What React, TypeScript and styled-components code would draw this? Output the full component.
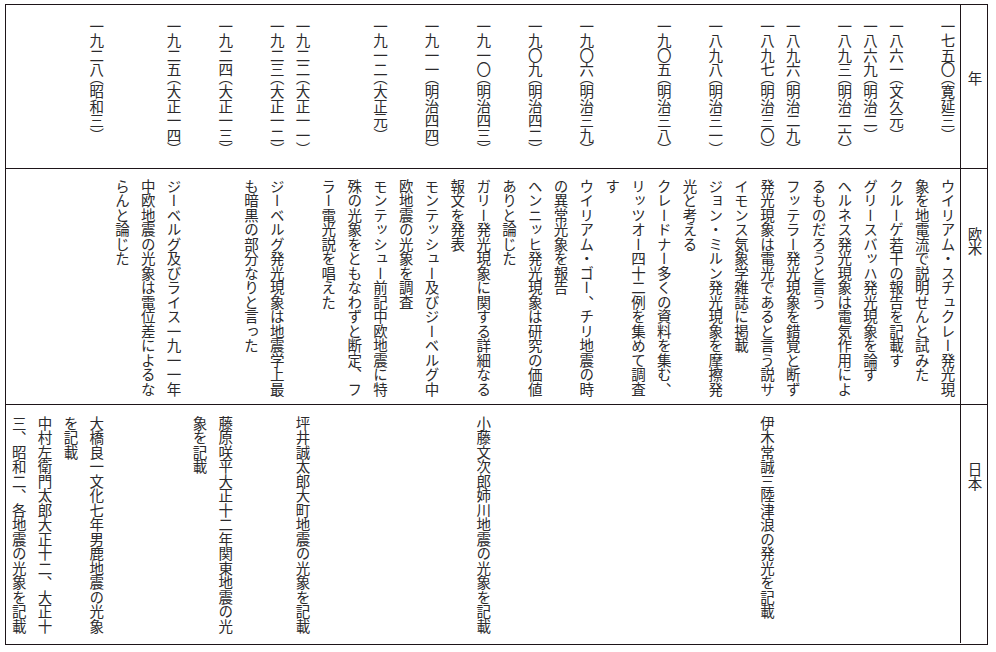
import React from "react";
import styled, { createGlobalStyle } from "styled-components";

const GlobalStyle = createGlobalStyle`
  html, body {
    margin: 0;
    background: #ffffff;
  }
  body {
    font-family: "Noto Sans CJK JP", sans-serif;
  }
`;

const Page = styled.div`
  padding: 4px 0 0 5px;
`;

// 縦書きのグリッド: columns = 上下の帯 (年/欧米/日本), rows = 右から左へ並ぶ各年
const Chart = styled.div`
  writing-mode: vertical-rl;
  display: grid;
  grid-template-columns: 164px 236px 238px;
  height: 641px;
  box-sizing: border-box;
  border: 1.5px solid #1e1519;
  font-size: 14.5px;
  line-height: 25.8px;
  color: #2b2a2c;
`;

type Band = "year" | "west" | "japan";

const padTop: Record<Band, number> = { year: 14, west: 10, japan: 11 };
const padBottom: Record<Band, number> = { year: 2, west: 4, japan: 5 };

const Cell = styled.div<{ $band: Band }>`
  box-sizing: border-box;
  padding-top: ${(p) => padTop[p.$band]}px;
  padding-bottom: ${(p) => padBottom[p.$band]}px;
  border-bottom: ${(p) => (p.$band === "japan" ? "none" : "1.5px solid #1e1519")};
  ${(p) =>
    p.$band === "year" &&
    `
    white-space: nowrap;
    font-feature-settings: "vhal" 1;
  `}
`;

const HeadCell = styled.div<{ $top: number; $last?: boolean }>`
  box-sizing: border-box;
  padding-top: ${(p) => p.$top}px;
  border-left: 1.5px solid #1e1519;
  border-bottom: ${(p) => (p.$last ? "none" : "1.5px solid #1e1519")};
  width: 27px;
  text-align: start;
`;

const Entry = styled.div``;

type Row = { year: string; west?: string; japan?: string[] };

const rows: Row[] = [
  { year: "一七五〇（寛延三）", west: "ウイリアム・スチュクレー発光現象を地電流で説明せんと試みた" },
  { year: "一八六一（文久元）", west: "クルーゲ若干の報告を記載す" },
  { year: "一八六九（明治二）", west: "グリースバッハ発光現象を論ず" },
  { year: "一八九三（明治二六）", west: "ヘルネス発光現象は電気作用によるものだろうと言う" },
  { year: "一八九六（明治二九）", west: "フッテラー発光現象を錯覚と断ず" },
  {
    year: "一八九七（明治三〇）",
    west: "発光現象は電光であると言う説サイモンス気象学雑誌に掲載",
    japan: ["伊木常誠三陸津浪の発光を記載"],
  },
  { year: "一八九八（明治三一）", west: "ジョン・ミルン発光現象を摩擦発光と考える" },
  { year: "一九〇五（明治三八）", west: "クレードナー多くの資料を集む、リッツオー四十二例を集めて調査す" },
  { year: "一九〇六（明治三九）", west: "ウイリアム・ゴー、チリ地震の時の異常光象を報告" },
  { year: "一九〇九（明治四二）", west: "ヘンニッヒ発光現象は研究の価値ありと論じた" },
  {
    year: "一九一〇（明治四三）",
    west: "ガリー発光現象に関する詳細なる報文を発表",
    japan: ["小藤文次郎姉川地震の光象を記載"],
  },
  { year: "一九一一（明治四四）", west: "モンテッシュー及びジーベルグ中欧地震の光象を調査" },
  {
    year: "一九一二（大正元）",
    west: "モンテッシュー前記中欧地震に特殊の光象をともなわずと断定、フラー電光説を唱えた",
  },
  { year: "一九二二（大正一一）", japan: ["坪井誠太郎大町地震の光象を記載"] },
  { year: "一九二三（大正一二）", west: "ジーベルグ発光現象は地震学上最も暗黒の部分なりと言った" },
  { year: "一九二四（大正一三）", japan: ["藤原咲平大正十二年関東地震の光象を記載"] },
  {
    year: "一九二五（大正一四）",
    west: "ジーベルグ及びライス一九一一年中欧地震の光象は電位差によるならんと論じた",
  },
  {
    year: "一九二八（昭和三）",
    japan: [
      "大橋良一文化七年男鹿地震の光象を記載",
      "中村左衛門太郎大正十二、大正十三、昭和二、各地震の光象を記載",
    ],
  },
];

export default function App() {
  return (
    <>
      <GlobalStyle />
      <Page>
        <Chart>
          <HeadCell $top={66}>年</HeadCell>
          <HeadCell $top={58}>欧米</HeadCell>
          <HeadCell $top={57} $last>
            日本
          </HeadCell>
          {rows.map((r) => (
            <React.Fragment key={r.year}>
              <Cell $band="year">{r.year}</Cell>
              <Cell $band="west">{r.west}</Cell>
              <Cell $band="japan">
                {r.japan?.map((t) => (
                  <Entry key={t}>{t}</Entry>
                ))}
              </Cell>
            </React.Fragment>
          ))}
        </Chart>
      </Page>
    </>
  );
}
